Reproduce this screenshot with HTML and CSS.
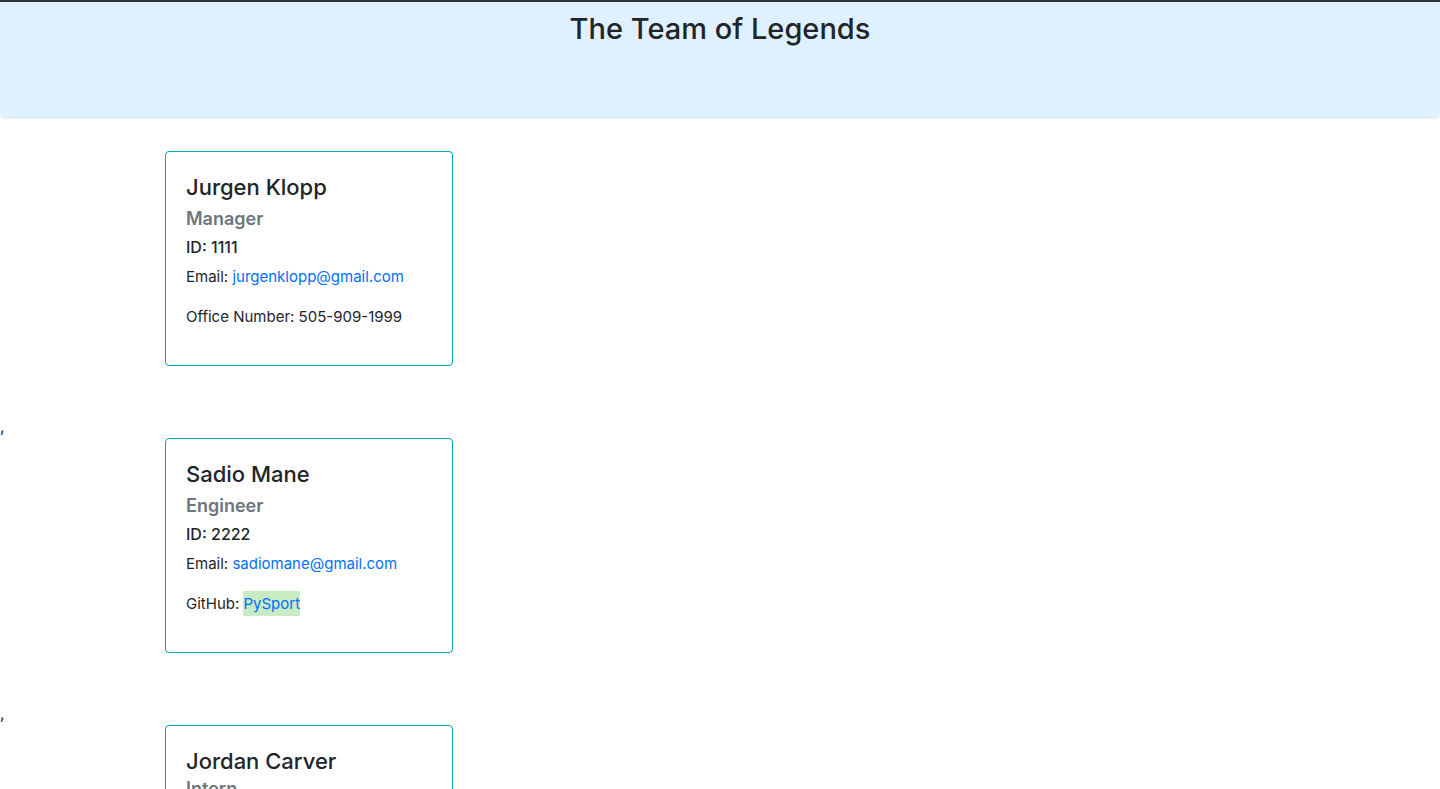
FILE: index.html
```html
<!DOCTYPE html>
<html lang="en">
<head>
<meta charset="utf-8">
<meta name="viewport" content="width=device-width, initial-scale=1">
<title>The Team of Legends</title>
<link rel="stylesheet" href="styles.css">
</head>
<body>
<header class="banner"><h1 class="banner-title">The Team of Legends</h1></header>
<main>
<section class="container"><article class="card">
<h2 class="card-title">Jurgen Klopp</h2>
<h3 class="card-role">Manager</h3>
<h4 class="card-id">ID: 1111</h4>
<p class="card-text">Email: <a href="mailto:jurgenklopp@gmail.com">jurgenklopp@gmail.com</a></p>
<p class="card-text">Office Number: 505-909-1999</p>
</article></section>
<div class="separator">,</div>
<section class="container"><article class="card">
<h2 class="card-title">Sadio Mane</h2>
<h3 class="card-role">Engineer</h3>
<h4 class="card-id">ID: 2222</h4>
<p class="card-text">Email: <a href="mailto:sadiomane@gmail.com">sadiomane@gmail.com</a></p>
<p class="card-text">GitHub: <a class="highlight" href="https://github.com/PySport">PySport</a></p>
</article></section>
<div class="separator">,</div>
<section class="container"><article class="card card-compact">
<h2 class="card-title">Jordan Carver</h2>
<h3 class="card-role">Intern</h3>
</article></section>
</main>
</body>
</html>
```

FILE: styles.css
```css
* { box-sizing: border-box; }
body {
  margin: 0;
  height: 100vh;
  overflow: hidden;
  font-family: Inter, "Liberation Sans", sans-serif;
  font-size: 16px;
  line-height: 24px;
  color: #212529;
  background: #fff;
}
h1, h2, h3, h4, p { margin: 0; }
a { color: #006fff; text-decoration: none; }
.banner {
  padding: 8px 16px 72px;
  border-top: 2px solid #303437;
  border-radius: 0 0 5px 5px;
  background: #dff1fe;
  text-align: center;
}
.banner-title { font-size: 29px; line-height: 37px; font-weight: 500; }
.container { max-width: 1140px; margin: 32px auto 0; padding: 0 15px; }
.card {
  width: 288px;
  min-height: 215px;
  padding: 20px;
  border: 1px solid #00a5b8;
  border-radius: 4px;
}
.card-title { font-size: 22px; line-height: 31px; font-weight: 500; margin-bottom: 4px; }
.card-compact .card-title { margin-bottom: 0; }
.card-role { font-size: 18px; line-height: 24px; font-weight: 600; color: #6c757d; margin-bottom: 6px; }
.card-id { font-size: 16px; line-height: 20px; font-weight: 500; margin-bottom: 8px; }
.card-text { font-size: 15px; margin-bottom: 16px; }
.separator { padding-top: 48px; margin-bottom: -32px; }
.highlight { background: #c8ebc4; padding: 3px 0; }
```
